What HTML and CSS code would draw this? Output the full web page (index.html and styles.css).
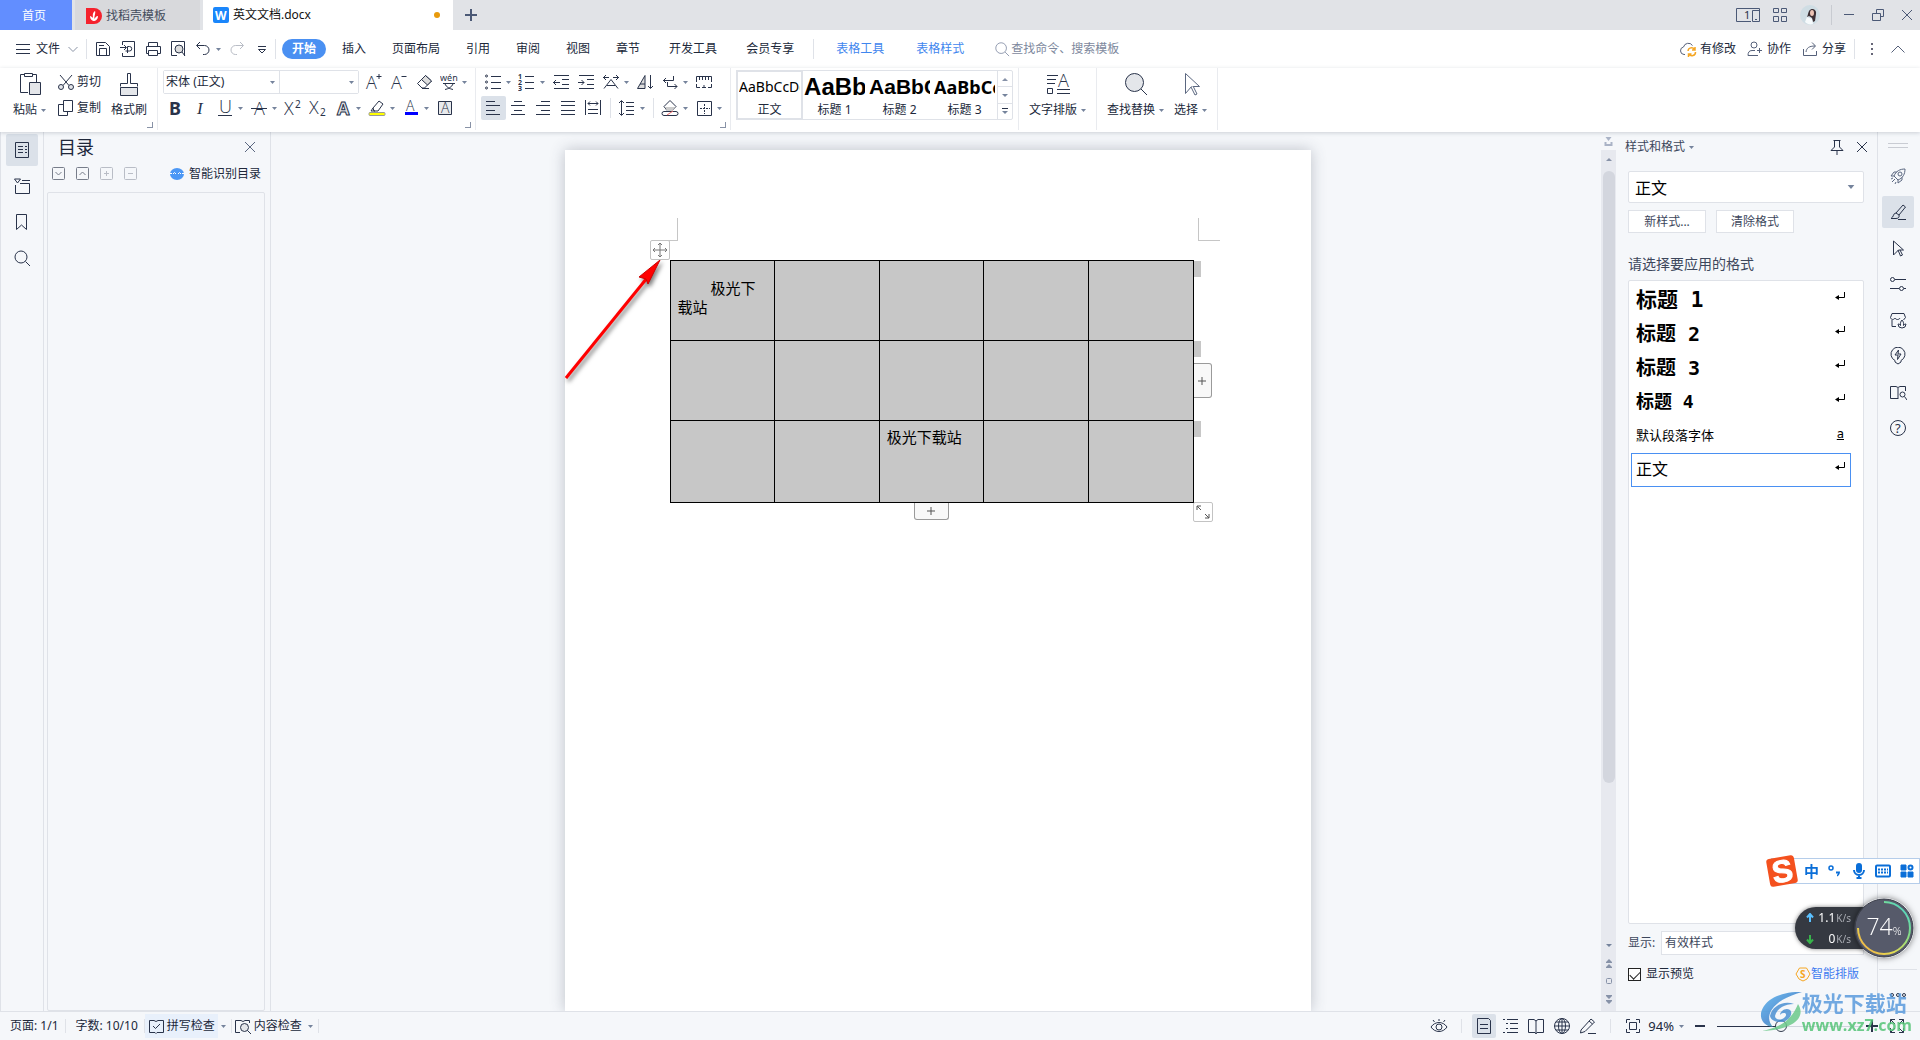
FILE: index.html
```
<!DOCTYPE html>
<html lang="zh-CN">
<head>
<meta charset="utf-8">
<title>英文文档.docx</title>
<link rel="stylesheet" href="styles.css">
</head>
<body>
<svg class="sprite" aria-hidden="true">
  <symbol id="caret" viewBox="0 0 5 3"><path d="M0 0h5L2.500 3z" fill="#75839c"/></symbol>
  <symbol id="chev-down" viewBox="0 0 18 18"><path d="M4.500 7l4.500 4.500L13.500 7"/></symbol>
  <symbol id="chev-up" viewBox="0 0 18 18"><path d="M2.500 12.500L9 6l6.500 6.500"/></symbol>
  <symbol id="menu" viewBox="0 0 18 18"><path d="M2 4.500h14M2 9.500h14M2 13.500h14"/></symbol>
  <symbol id="plus" viewBox="0 0 18 18"><path d="M9 3v12M3 9h12" stroke-width="2"/></symbol>
  <symbol id="close" viewBox="0 0 18 18"><path d="M4 4l10 10M14 4L4 14"/></symbol>
  <symbol id="min" viewBox="0 0 18 18"><path d="M4 8.500h10"/></symbol>
  <symbol id="restore" viewBox="0 0 18 18"><path d="M3.500 7.500h8v7h-8zM7.500 7V3.500h7v7H12"/></symbol>
  <symbol id="apps" viewBox="0 0 18 18"><path d="M2.500 2.500h5v4h-5zM10.500 2.500h5v4h-5zM2.500 10.500h5v5h-5zM10.500 10.500h5v5h-5z"/></symbol>
  <symbol id="device" viewBox="0 0 24 16"><path d="M15 14.500H.500v-13h23v13h-7v-11h7M19 12.500h2"/><text x="8" y="12" font-size="11">1</text></symbol>
  <symbol id="docer" viewBox="0 0 16 16"><path d="M0 0h8a8 8 0 0 1 0 16H0z" fill="#f5222d" stroke="none"/><path d="M4 8c0 4 3 5 4 5s4-1 4-5c-2 0-3 2-3.500 3C8 8 10 5 9 3 6 5 7 8 7 10 6 9 5 8 4 8z" fill="#fff" stroke="none"/></symbol>
  <symbol id="wps" viewBox="0 0 16 16"><rect width="16" height="16" rx="2" fill="#1a86fb" stroke="none"/><text x="2" y="13" font-size="12" font-weight="700" class="white">W</text></symbol>
  <symbol id="save" viewBox="0 0 18 18"><path d="M2.500 2.500h9l4 4v9h-13zM5.500 15V8.500h7V15M5 5.500h5"/></symbol>
  <symbol id="export" viewBox="0 0 18 18"><path d="M3.500 5V1.500h12v15h-12V13M1 7.500h6M5 5l2.500 2.500L5 10M8.500 13V6.500h2a2 2 0 0 1 0 4.500h-4"/></symbol>
  <symbol id="print" viewBox="0 0 18 18"><path d="M4.500 6V2.500h9V6M4 13.500H2.500v-7h14v7H14M4.500 10.500h9v5h-9z"/></symbol>
  <symbol id="preview" viewBox="0 0 18 18"><path d="M8 15.500H2.500v-14h13V16"/><circle cx="10" cy="9" r="4" fill="#ddd"/><path d="M13 12l3 4"/></symbol>
  <symbol id="undo" viewBox="0 0 18 18"><path d="M6 2L2.500 5.500 6 9M3 5.500h7.500a4.500 4.500 0 0 1 0 9H9"/></symbol>
  <symbol id="redo" viewBox="0 0 18 18"><path d="M12 2l3.500 3.500L12 9M15 5.500H7.500a4.500 4.500 0 0 0 0 9H9"/></symbol>
  <symbol id="custom" viewBox="0 0 18 18"><path d="M5 6.500h8M5.500 9.500h7L9 13z"/></symbol>
  <symbol id="search" viewBox="0 0 18 18"><circle cx="8" cy="8" r="6"/><path d="M12.500 12.500L17 17"/></symbol>
  <symbol id="cloud" viewBox="0 0 18 18"><path d="M6 14.500H5a3.800 3.800 0 0 1-.5-7.500 5 5 0 0 1 9-1.500"/><path d="M9 11a3.500 3.500 0 0 1 6.500-1.500M16.500 12a3.500 3.500 0 0 1-6.500 2M16 7v3h-3M9.500 17v-3h3" stroke="#f5a623" stroke-width="1.500"/></symbol>
  <symbol id="collab" viewBox="0 0 18 18"><circle cx="8" cy="5" r="3"/><path d="M9 10.500H6c-3 0-4 2-4 5h10M11 10.500h5M13.500 8v5"/></symbol>
  <symbol id="share" viewBox="0 0 18 18"><path d="M2.500 9v6.500h13V11M5 12c.5-4 3-6 9-6M11 2.500L14.500 6 11 9.500"/></symbol>
  <symbol id="dots" viewBox="0 0 18 18"><path d="M8 3h2v2H8zM8 8h2v2H8zM8 13h2v2H8z" fill="#667" stroke="none"/></symbol>
  <symbol id="paste" viewBox="0 0 24 24"><path d="M10 20.500H2.500v-18H6M15 2.500h3.500V10M6.500 1.500h8v3h-8z"/><path d="M11.500 10.500h11v12h-11z" fill="#e4e6ea"/></symbol>
  <symbol id="cut" viewBox="0 0 18 18"><path d="M3 2l9 10.500M15 2L6 12.500"/><circle cx="4" cy="14" r="2.500" fill="#e4e6ea"/><circle cx="14" cy="14" r="2.500" fill="#e4e6ea"/></symbol>
  <symbol id="copy" viewBox="0 0 18 18"><path d="M6.500 1.500h9v11h-9zM6 5.500H1.500v11h9V13"/></symbol>
  <symbol id="brush" viewBox="0 0 24 24"><path d="M3.500 14.500v-3h7v-10h3v10h7v3"/><path d="M3.500 15.500h17v8h-17z" fill="#e4e6ea"/></symbol>
  <symbol id="a-plus" viewBox="0 0 18 18"><text x="1" y="16" class="thin">A</text><path d="M11.500 3.500h5M14 1v5"/></symbol>
  <symbol id="a-minus" viewBox="0 0 18 18"><text x="1" y="16" class="thin">A</text><path d="M11.500 3.500h5"/></symbol>
  <symbol id="eraser" viewBox="0 0 18 18"><path d="M2.500 10.500l8-8 6 5.500-7 7H7z"/><path d="M6.500 6.500l4-4 6 5.500-4 4z" fill="#ddd"/><path d="M7 15.500h7"/></symbol>
  <symbol id="pinyin" viewBox="0 0 18 18"><text x="0" y="8" font-size="9">wén</text><path d="M3 10.500h12M5 11c1 3 5 5 8 5.500M13 11c-1 3-5 5-8 5.500"/></symbol>
  <symbol id="bold" viewBox="0 0 18 18"><text x="3" y="16" font-size="18" font-weight="700">B</text></symbol>
  <symbol id="italic" viewBox="0 0 18 18"><text x="6" y="15" font-size="17" class="slant">I</text></symbol>
  <symbol id="under" viewBox="0 0 18 18"><text x="3" y="14" class="thin">U</text><path d="M2 16.500h14"/></symbol>
  <symbol id="strike" viewBox="0 0 18 18"><text x="4" y="16" class="thin">A</text><path d="M1 9.500h16"/></symbol>
  <symbol id="sup" viewBox="0 0 18 18"><text x="0" y="16" class="thin">X</text><text x="11" y="9" font-size="10">2</text></symbol>
  <symbol id="sub" viewBox="0 0 18 18"><text x="0" y="15" class="thin">X</text><text x="11" y="17" font-size="10">2</text></symbol>
  <symbol id="a-effect" viewBox="0 0 18 18"><text x="3" y="16" font-size="18" font-weight="700" class="outline">A</text></symbol>
  <symbol id="marker" viewBox="0 0 18 18"><path d="M5 9l6-7 4 3-5 7H6zM5 9l-2 3h4"/><rect x="1" y="13.500" width="16" height="3" rx="1" fill="#ff0" stroke="#999"/></symbol>
  <symbol id="a-color" viewBox="0 0 18 18"><text x="4" y="12" class="thin small-a">A</text><rect x="3" y="13" width="13" height="3" fill="#00f" stroke="none"/></symbol>
  <symbol id="a-box" viewBox="0 0 18 18"><path d="M2.500 2.500h13v13h-13z" fill="#e8eaed"/><text x="5" y="14" class="thin small-a">A</text></symbol>
  <symbol id="bullets" viewBox="0 0 18 18"><path d="M7 3.500h10M7 9.500h10M7 15.500h10"/><circle cx="2.500" cy="3" r="1"/><circle cx="2.500" cy="9" r="1"/><circle cx="2.500" cy="15" r="1"/></symbol>
  <symbol id="numbers" viewBox="0 0 18 18"><path d="M7 3.500h9M7 9.500h9M7 15.500h9"/><g font-size="7" font-weight="700"><text x="0" y="6">1</text><text x="0" y="12">2</text><text x="0" y="18">3</text></g></symbol>
  <symbol id="outdent" viewBox="0 0 18 18"><path d="M2 2.500h15M10 6.500h7M10 11.500h7M2 15.500h15M1 9.500h7M4 7L1.500 9.500 4 12"/></symbol>
  <symbol id="indent" viewBox="0 0 18 18"><path d="M2 2.500h15M10 6.500h7M10 11.500h7M2 15.500h15M1 9.500h6M4.500 7L7 9.500 4.500 12"/></symbol>
  <symbol id="scale" viewBox="0 0 18 18"><path d="M2 15.500l7-9 7 9M5 12.500h8M1 4.500h6M4 2L1.500 4.500 4 7M11 4.500h6M14 2l2.500 2.500L14 7"/></symbol>
  <symbol id="sort" viewBox="0 0 18 18"><path d="M1.500 15.500L9 2.500v13zM4 11h5" fill="#ddd"/><path d="M14.500 2v13M12 13l2.500 2.500L17 13"/></symbol>
  <symbol id="wrap" viewBox="0 0 18 18"><path d="M12.500 3v4.500H2M5 5L2.500 7.500 5 10M6.500 9v4.500H16M13.500 11l2.500 2.500-2.500 2.500"/></symbol>
  <symbol id="ruler" viewBox="0 0 18 18"><path d="M1.500 9V3.500h15V9M4.500 4v3M7.500 4v3M10.500 4v3M13.500 4v3M1.500 11v3.500H5M16.500 11v3.500H13M7 14.500h4M9 12v3"/></symbol>
  <symbol id="al-left" viewBox="0 0 18 18"><path d="M2 2.500h9M2 6.500h14M2 11.500h9M2 15.500h14"/></symbol>
  <symbol id="al-center" viewBox="0 0 18 18"><path d="M5 2.500h8M2 6.500h14M5 11.500h8M2 15.500h14"/></symbol>
  <symbol id="al-right" viewBox="0 0 18 18"><path d="M7 2.500h9M2 6.500h14M7 11.500h9M2 15.500h14"/></symbol>
  <symbol id="al-just" viewBox="0 0 18 18"><path d="M2 2.500h14M2 6.500h14M2 11.500h14M2 15.500h14"/></symbol>
  <symbol id="al-dist" viewBox="0 0 18 18"><path d="M1.500 1v15M16.500 1v15M4 10.500h10M4 14.500h10M4 4.500h10M6 2.500l-2 2 2 2M12 2.500l2 2-2 2"/></symbol>
  <symbol id="spacing" viewBox="0 0 18 18"><path d="M8 3.500h8M8 7.500h8M8 11.500h8M8 15.500h8M3.500 2v14M1 4l2.500-2.500L6 4M1 14l2.500 2.500L6 14"/></symbol>
  <symbol id="fill" viewBox="0 0 18 18"><path d="M3 7.500l6-6 6 6-4 4H6z"/><path d="M4 8h10l-3 4H6z" fill="#ccc" stroke="none"/><path d="M3 12.500h12a1.500 1.500 0 0 1 0 4H3a1.500 1.500 0 0 1 0-4"/><path d="M6 16l6-4" stroke="#e66"/></symbol>
  <symbol id="border" viewBox="0 0 18 18"><path d="M2.500 2.500h14v14h-14z"/><path d="M9.500 5v10M5 9.500h10" stroke-dasharray="2 1"/></symbol>
  <symbol id="tri-up" viewBox="0 0 18 18"><path d="M6 11h6L9 8z" fill="#8792a8" stroke="none"/></symbol>
  <symbol id="tri-down" viewBox="0 0 18 18"><path d="M6 8h6l-3 3z" fill="#75839c" stroke="none"/></symbol>
  <symbol id="tri-more" viewBox="0 0 18 18"><path d="M6 6.500h6"/><path d="M6 9h6l-3 3z" fill="#75839c" stroke="none"/></symbol>
  <symbol id="typeset" viewBox="0 0 24 24"><path d="M1 3.500h11M1 7.500h9M1 11.500h8M1.500 16.500h5v5h-5zM11 17.500h13M11 21.500h13"/><text x="12" y="15" class="thin">A</text></symbol>
  <symbol id="find" viewBox="0 0 24 24"><circle cx="10.500" cy="10.500" r="9" fill="#e4e6ea"/><path d="M17 17l6 6"/></symbol>
  <symbol id="arrow-big" viewBox="0 0 24 24"><path d="M6.500 1.500l14 13h-8l-6 7z"/><path d="M12 15l4 8 2-1-4-8" fill="#fff"/></symbol>
  <symbol id="outline" viewBox="0 0 18 18"><path d="M2.500 1.500h13v15h-13zM5 5.500h5M12 5.500h2M5 8.500h5M12 8.500h2M5 11.500h5M12 11.500h2"/></symbol>
  <symbol id="folder" viewBox="0 0 18 18"><path d="M1.500 2h6L4.500 6zM9 3.500h8M2.500 8v8.500h14v-10H7"/></symbol>
  <symbol id="mark" viewBox="0 0 18 18"><path d="M3.500 1.500h10v15l-5-4.500-5 4.500z"/></symbol>
  <symbol id="box-down" viewBox="0 0 14 14"><rect x=".500" y=".500" width="12" height="12" rx="1"/><path d="M3.500 5l3 3 3-3"/></symbol>
  <symbol id="box-up" viewBox="0 0 14 14"><rect x=".500" y=".500" width="12" height="12" rx="1"/><path d="M3.500 8l3-3 3 3"/></symbol>
  <symbol id="box-plus" viewBox="0 0 14 14"><rect x=".500" y=".500" width="12" height="12" rx="1"/><path d="M4 6.500h5M6.500 4v5"/></symbol>
  <symbol id="box-minus" viewBox="0 0 14 14"><rect x=".500" y=".500" width="12" height="12" rx="1"/><path d="M4 6.500h5"/></symbol>
  <symbol id="robot" viewBox="0 0 16 14"><ellipse cx="8" cy="7" rx="7" ry="6" fill="#4b97f5" stroke="none"/><path d="M1 6.500h2M13 6.500h2M4 7l1.500-1.500L7 7M9 7l1.500-1.500L12 7" stroke="#fff"/></symbol>
  <symbol id="move" viewBox="0 0 18 18"><path d="M9 2v14M2 9h14M7 4l2-2 2 2M7 14l2 2 2-2M4 7L2 9l2 2M14 7l2 2-2 2" stroke="#777"/></symbol>
  <symbol id="resize" viewBox="0 0 18 18"><path d="M3 7V3h4M3 3l4 4M11 15h4v-4M15 15l-4-4" stroke="#555"/></symbol>
  <symbol id="add" viewBox="0 0 18 18"><path d="M9 5v8M5 9h8" stroke="#555"/></symbol>
  <symbol id="pin" viewBox="0 0 18 18"><path d="M5.500 2.500h7M6.500 3v6L3 12.500h12L11.500 9V3M9 13v4"/></symbol>
  <symbol id="enter" viewBox="0 0 18 18"><path d="M12.500 5v5.500H6"/><path d="M3 10.500L7 8v5z" fill="#000" stroke="none"/></symbol>
  <symbol id="rocket" viewBox="0 0 18 18"><path d="M5 9c2-5 6-7 11-7 0 5-2 9-7 11zM5 9H2l3-4h3M9 13v3l4-3v-3M2 12l2-1M3 15l3-3M6 17l1-2"/><circle cx="11" cy="7" r="2"/></symbol>
  <symbol id="pencil" viewBox="0 0 18 18"><path d="M7 10l7-8 2.500 2L10 12M7 10c-3 0-2 4-5 5.500h5c3 0 3.500-2 3-3.500zM9 16.500h8"/></symbol>
  <symbol id="pointer" viewBox="0 0 18 18"><path d="M4.500 2l10 9h-5l-5 5zM9 11l2.500 6 2-1-2.500-5"/></symbol>
  <symbol id="sliders" viewBox="0 0 18 18"><circle cx="3.500" cy="4.500" r="2"/><circle cx="12.500" cy="13.500" r="2"/><path d="M6 4.500h11M1 13.500h9M15 13.500h2"/></symbol>
  <symbol id="shop" viewBox="0 0 18 18"><path d="M3 9v6.500h4M3 2.500h12l1.500 4-2 2.500M3 2.500l-1.500 4C2 9 5 9 6 7c1 2 4 2 5 0M9 13a4 4 0 0 0 8 0c-1 0-2 .5-2.500 1.500C15 12 14 10 13 9c-1 1-2 3-1.500 5.500C11 13.500 10 13 9 13z"/></symbol>
  <symbol id="bulb" viewBox="0 0 18 18"><path d="M6 15v-1.500a7 7 0 1 1 6 0V15l-3 2zM9.500 3L6 8h3l-.5 4.500L12 7H9z"/></symbol>
  <symbol id="book-search" viewBox="0 0 18 18"><path d="M9 15.500H1.500v-12H7l2 1 2-1h5.500V8M9 5v11"/><circle cx="13.500" cy="11.500" r="2.500"/><path d="M15.500 13.500L18 17"/></symbol>
  <symbol id="help" viewBox="0 0 18 18"><circle cx="9" cy="9" r="7.500"/><text x="6" y="14" font-size="13">?</text></symbol>
  <symbol id="more" viewBox="0 0 18 18"><circle cx="3" cy="9" r="1.500"/><circle cx="9" cy="9" r="1.500"/><circle cx="15" cy="9" r="1.500"/></symbol>
  <symbol id="ruler-toggle" viewBox="0 0 14 18"><path d="M4 5h6L7 9zM3 10h2v4H3zM9 10h2v4H9zM5 12h4v2H5z" fill="#aab3c6" stroke="none"/></symbol>
  <symbol id="page-up" viewBox="0 0 14 18"><path d="M4 8h6L7 5zM4 13h6l-3-3z" fill="#8792a8"/><path d="M4 8.500h6M4 13.500h6" stroke="#8792a8"/></symbol>
  <symbol id="page-dot" viewBox="0 0 14 18"><rect x="4.500" y="6.500" width="5" height="5" rx="1" stroke="#8792a8"/></symbol>
  <symbol id="page-down" viewBox="0 0 14 18"><path d="M4 6h6L7 9zM4 11h6l-3 3z" fill="#8792a8"/><path d="M4 5.500h6M4 10.500h6" stroke="#8792a8"/></symbol>
  <symbol id="gold" viewBox="0 0 16 16"><path d="M4.500 2h7L15 8l-3 5-4 2-4-2-3-5z" stroke="#f5a623"/><text x="5" y="12" font-size="10" font-weight="700" class="orange">S</text></symbol>
  <symbol id="spell" viewBox="0 0 18 18"><path d="M8 15.500H2.500v-12H7l2 1 2-1h5.500v12H10l-1 1zM6 9l2.500 2.500L13 7"/></symbol>
  <symbol id="content" viewBox="0 0 18 18"><path d="M6 15.500H1.500v-12H7l2 1 2-1h4.500V6"/><circle cx="10.500" cy="10.500" r="4" fill="#e4e6ea"/><path d="M13.500 13.500L17 17"/></symbol>
  <symbol id="eye" viewBox="0 0 18 18"><path d="M1 10c4-6 12-6 16 0-4 6-12 6-16 0zM9 2v2M3 3l1.500 2M15 3l-1.500 2"/><circle cx="9" cy="10" r="3"/></symbol>
  <symbol id="v-page" viewBox="0 0 18 18"><path d="M2.500 1.500h11l2 2v13h-13zM5 7.500h8M5 11.500h8"/></symbol>
  <symbol id="v-list" viewBox="0 0 18 18"><path d="M2 2.500h2M6 2.500h11M5 6.500h2M9 6.500h8M5 11.500h2M9 11.500h8M2 15.500h2M6 15.500h11"/></symbol>
  <symbol id="v-read" viewBox="0 0 18 18"><path d="M8 15.500H1.500v-13H7l2 1.500 2-1.500h5.500v13H10L9 17zM9 4v12"/></symbol>
  <symbol id="v-web" viewBox="0 0 18 18"><circle cx="9" cy="9" r="7.500"/><ellipse cx="9" cy="9" rx="3.500" ry="7.500"/><path d="M1.500 9h15M3 5h12M3 13h12M9 2v14"/></symbol>
  <symbol id="v-write" viewBox="0 0 18 18"><path d="M2 13l10-11 3.500 3L6 14.500 1.500 16zM10 4l3.500 3M9 16.500h8"/></symbol>
  <symbol id="fit" viewBox="0 0 18 18"><path d="M2.500 6V2.500H6M12 2.500h3.500V6M15.500 12v3.500H12M6 15.500H2.500V12M5.500 5.500h7v7h-7z"/></symbol>
  <symbol id="full" viewBox="0 0 18 18"><path d="M2.500 7V2.500H7M2.500 2.500L7 7M11 2.500h4.500V7M15.500 2.500L11 7M15.500 11v4.500H11M15.500 15.500L11 11M7 15.500H2.500V11M2.500 15.500L7 11"/></symbol>
  <symbol id="mic" viewBox="0 0 18 18"><rect x="6" y="1" width="6" height="10" rx="3" fill="#0a6ed8" stroke="none"/><path d="M4 8a5 5 0 0 0 10 0M9 13v4M6.500 16h5" stroke="#0a6ed8" stroke-width="2"/></symbol>
  <symbol id="keyboard" viewBox="0 0 18 18"><rect x="2" y="3.500" width="14" height="11" rx="1" stroke="#0a6ed8" stroke-width="2"/><path d="M4 7.500h10M4 10.500h10" stroke="#0a6ed8" stroke-dasharray="2 1" stroke-width="2"/></symbol>
  <symbol id="tools" viewBox="0 0 18 18"><path d="M3 3h5v5H3zM3 10h5v5H3zM10 10h5v5h-5z" fill="#0a6ed8" stroke="#0a6ed8"/><circle cx="12.500" cy="5.500" r="2" stroke="#0a6ed8" stroke-width="2"/></symbol>
  <symbol id="punct" viewBox="0 0 18 18"><circle cx="5" cy="6" r="2" stroke="#0a6ed8" stroke-width="1.500"/><path d="M10 9.500h4c0 2.500-1 4-3 5v-1.500l1-1.500h-2z" fill="#0a6ed8" stroke="none"/></symbol>
  <symbol id="up" viewBox="0 0 10 10"><path d="M5 9V1M2 4.500L5 1l3 3.500" stroke="#5ac0ff" stroke-width="2"/></symbol>
  <symbol id="down" viewBox="0 0 10 10"><path d="M5 1v8M2 5.500L5 9l3-3.500" stroke="#37b34a" stroke-width="2"/></symbol>
</svg>

<header class="titlebar">
  <nav class="tabs" aria-label="文档标签">
    <button class="tab tab-home">首页</button>
    <button class="tab tab-docer"><svg class="i16"><use href="#docer"/></svg>找稻壳模板</button>
    <button class="tab tab-doc"><svg class="i16"><use href="#wps"/></svg><span class="tab-name">英文文档.docx</span><i class="unsaved"></i></button>
    <button class="tab-new" aria-label="新建"><svg class="i18"><use href="#plus"/></svg></button>
  </nav>
  <div class="window-tools">
    <button class="win" aria-label="设备"><svg class="i24w"><use href="#device"/></svg></button>
    <button class="win" aria-label="应用"><svg class="i18"><use href="#apps"/></svg></button>
    <svg class="avatar" viewBox="0 0 20 20" role="img" aria-label="头像"><circle cx="10" cy="10" r="10" fill="#cfdde4"/><path d="M9 6c3-4 8-1 7 3l-1 7-2 1-1-4-3-2-2 1c1-2 1-4 2-6z" fill="#3c3035"/><ellipse cx="12" cy="8" rx="2" ry="3" fill="#eac3b4"/><path d="M7 12l5 2 1 5c-3 1-6 0-8-2z" fill="#f6fafc"/></svg>
    <i class="vsep"></i>
    <button class="win" aria-label="最小化"><svg class="i18"><use href="#min"/></svg></button>
    <button class="win" aria-label="还原"><svg class="i18"><use href="#restore"/></svg></button>
    <button class="win" aria-label="关闭"><svg class="i18"><use href="#close"/></svg></button>
  </div>
</header>

<div class="menubar">
  <button class="file"><svg class="i18"><use href="#menu"/></svg>文件<svg class="i18 faint"><use href="#chev-down"/></svg></button>
  <i class="vsep"></i>
  <div class="tools quick">
    <button class="tool" aria-label="保存"><svg class="i18"><use href="#save"/></svg></button>
    <button class="tool" aria-label="输出"><svg class="i18"><use href="#export"/></svg></button>
    <button class="tool" aria-label="打印"><svg class="i18"><use href="#print"/></svg></button>
    <button class="tool" aria-label="预览"><svg class="i18"><use href="#preview"/></svg></button>
    <button class="tool drop" aria-label="撤销"><svg class="i18"><use href="#undo"/></svg><svg class="caret"><use href="#caret"/></svg></button>
    <button class="tool off" aria-label="恢复"><svg class="i18"><use href="#redo"/></svg></button>
    <button class="tool" aria-label="自定义"><svg class="i18"><use href="#custom"/></svg></button>
  </div>
  <i class="vsep"></i>
  <nav class="menu" aria-label="功能区">
    <button class="menu-item current">开始</button>
    <button class="menu-item">插入</button>
    <button class="menu-item">页面布局</button>
    <button class="menu-item">引用</button>
    <button class="menu-item">审阅</button>
    <button class="menu-item">视图</button>
    <button class="menu-item">章节</button>
    <button class="menu-item roomy">开发工具</button>
    <button class="menu-item">会员专享</button>
    <i class="vsep"></i>
    <button class="menu-item roomy context">表格工具</button>
    <button class="menu-item roomy context">表格样式</button>
  </nav>
  <label class="search"><svg class="i18"><use href="#search"/></svg><input type="text" placeholder="查找命令、搜索模板" aria-label="查找命令、搜索模板"></label>
  <div class="menu-right">
    <button class="link-tool"><svg class="i18"><use href="#cloud"/></svg>有修改</button>
    <button class="link-tool"><svg class="i18"><use href="#collab"/></svg>协作</button>
    <button class="link-tool"><svg class="i18"><use href="#share"/></svg>分享</button>
    <i class="vsep"></i>
    <button class="plain" aria-label="更多"><svg class="i18"><use href="#dots"/></svg></button>
    <button class="plain" aria-label="收起"><svg class="i18"><use href="#chev-up"/></svg></button>
  </div>
</div>

<div class="ribbon">
  <section class="group clipboard">
    <button class="big"><svg class="i24"><use href="#paste"/></svg><span>粘贴<svg class="caret"><use href="#caret"/></svg></span></button>
    <div class="stack">
      <button class="small"><svg class="i18"><use href="#cut"/></svg>剪切</button>
      <button class="small"><svg class="i18"><use href="#copy"/></svg>复制</button>
    </div>
    <button class="big"><svg class="i24"><use href="#brush"/></svg><span>格式刷</span></button>
    <button class="launcher" aria-label="剪贴板"></button>
  </section>

  <section class="group rows">
    <div class="tools">
      <div class="fonts">
        <div class="combo font-name"><select aria-label="字体"><option>宋体 (正文)</option></select><svg class="caret"><use href="#caret"/></svg></div>
        <div class="combo font-size"><select aria-label="字号"><option></option></select><svg class="caret"><use href="#caret"/></svg></div>
      </div>
      <button class="tool" aria-label="增大字号"><svg class="i18"><use href="#a-plus"/></svg></button>
      <button class="tool" aria-label="减小字号"><svg class="i18"><use href="#a-minus"/></svg></button>
      <button class="tool" aria-label="清除格式"><svg class="i18"><use href="#eraser"/></svg></button>
      <button class="tool drop" aria-label="拼音"><svg class="i18"><use href="#pinyin"/></svg><svg class="caret"><use href="#caret"/></svg></button>
    </div>
    <div class="tools">
      <button class="tool" aria-label="加粗"><svg class="i18"><use href="#bold"/></svg></button>
      <button class="tool" aria-label="倾斜"><svg class="i18"><use href="#italic"/></svg></button>
      <button class="tool drop" aria-label="下划线"><svg class="i18"><use href="#under"/></svg><svg class="caret"><use href="#caret"/></svg></button>
      <button class="tool drop" aria-label="删除线"><svg class="i18"><use href="#strike"/></svg><svg class="caret"><use href="#caret"/></svg></button>
      <button class="tool" aria-label="上标"><svg class="i18"><use href="#sup"/></svg></button>
      <button class="tool" aria-label="下标"><svg class="i18"><use href="#sub"/></svg></button>
      <button class="tool drop" aria-label="文字效果"><svg class="i18"><use href="#a-effect"/></svg><svg class="caret"><use href="#caret"/></svg></button>
      <button class="tool drop" aria-label="突出显示"><svg class="i18"><use href="#marker"/></svg><svg class="caret"><use href="#caret"/></svg></button>
      <button class="tool drop" aria-label="字体颜色"><svg class="i18"><use href="#a-color"/></svg><svg class="caret"><use href="#caret"/></svg></button>
      <button class="tool" aria-label="字符底纹"><svg class="i18"><use href="#a-box"/></svg></button>
    </div>
    <button class="launcher" aria-label="字体设置"></button>
  </section>

  <section class="group rows">
    <div class="tools">
      <button class="tool drop" aria-label="项目符号"><svg class="i18"><use href="#bullets"/></svg><svg class="caret"><use href="#caret"/></svg></button>
      <button class="tool drop" aria-label="编号"><svg class="i18"><use href="#numbers"/></svg><svg class="caret"><use href="#caret"/></svg></button>
      <button class="tool" aria-label="减少缩进"><svg class="i18"><use href="#outdent"/></svg></button>
      <button class="tool" aria-label="增加缩进"><svg class="i18"><use href="#indent"/></svg></button>
      <button class="tool drop" aria-label="中文版式"><svg class="i18"><use href="#scale"/></svg><svg class="caret"><use href="#caret"/></svg></button>
      <button class="tool" aria-label="排序"><svg class="i18"><use href="#sort"/></svg></button>
      <button class="tool drop" aria-label="显示标记"><svg class="i18"><use href="#wrap"/></svg><svg class="caret"><use href="#caret"/></svg></button>
      <button class="tool" aria-label="制表位"><svg class="i18"><use href="#ruler"/></svg></button>
    </div>
    <div class="tools">
      <button class="tool on" aria-label="左对齐"><svg class="i18"><use href="#al-left"/></svg></button>
      <button class="tool" aria-label="居中"><svg class="i18"><use href="#al-center"/></svg></button>
      <button class="tool" aria-label="右对齐"><svg class="i18"><use href="#al-right"/></svg></button>
      <button class="tool" aria-label="两端对齐"><svg class="i18"><use href="#al-just"/></svg></button>
      <button class="tool" aria-label="分散对齐"><svg class="i18"><use href="#al-dist"/></svg></button>
      <i class="vsep"></i>
      <button class="tool drop" aria-label="行距"><svg class="i18"><use href="#spacing"/></svg><svg class="caret"><use href="#caret"/></svg></button>
      <i class="vsep"></i>
      <button class="tool drop" aria-label="底纹颜色"><svg class="i18"><use href="#fill"/></svg><svg class="caret"><use href="#caret"/></svg></button>
      <button class="tool drop" aria-label="边框"><svg class="i18"><use href="#border"/></svg><svg class="caret"><use href="#caret"/></svg></button>
    </div>
    <button class="launcher" aria-label="段落设置"></button>
  </section>

  <section class="group">
    <div class="gallery">
      <button class="style picked"><span class="sample s0">AaBbCcDd</span><span>正文</span></button>
      <button class="style"><span class="sample s1">AaBb</span><span>标题 1</span></button>
      <button class="style"><span class="sample s2">AaBbC</span><span>标题 2</span></button>
      <button class="style"><span class="sample s3">AaBbCc</span><span>标题 3</span></button>
      <div class="gallery-nav">
        <button aria-label="上一行"><svg class="i18"><use href="#tri-up"/></svg></button>
        <button aria-label="下一行"><svg class="i18"><use href="#tri-down"/></svg></button>
        <button aria-label="展开"><svg class="i18"><use href="#tri-more"/></svg></button>
      </div>
    </div>
  </section>
  <section class="group wide">
    <button class="big"><svg class="i24"><use href="#typeset"/></svg><span>文字排版<svg class="caret"><use href="#caret"/></svg></span></button>
  </section>
  <section class="group wide">
    <button class="big"><svg class="i24"><use href="#find"/></svg><span>查找替换<svg class="caret"><use href="#caret"/></svg></span></button>
    <button class="big"><svg class="i24 soft"><use href="#arrow-big"/></svg><span>选择<svg class="caret"><use href="#caret"/></svg></span></button>
  </section>
</div>

<main class="work">
  <nav class="rail rail-left" aria-label="导航">
    <button class="rail-btn on" aria-label="目录"><svg class="i18"><use href="#outline"/></svg></button>
    <button class="rail-btn" aria-label="章节"><svg class="i18"><use href="#folder"/></svg></button>
    <button class="rail-btn" aria-label="书签"><svg class="i18"><use href="#mark"/></svg></button>
    <button class="rail-btn" aria-label="查找"><svg class="i18"><use href="#search"/></svg></button>
  </nav>

  <aside class="toc">
    <div class="toc-head"><h2>目录</h2><button class="plain" aria-label="关闭目录"><svg class="i18 soft"><use href="#close"/></svg></button></div>
    <div class="toc-tools">
      <button class="plain mid" aria-label="展开"><svg class="i14"><use href="#box-down"/></svg></button>
      <button class="plain mid" aria-label="收起"><svg class="i14"><use href="#box-up"/></svg></button>
      <button class="plain off" aria-label="增加"><svg class="i14"><use href="#box-plus"/></svg></button>
      <button class="plain off" aria-label="减少"><svg class="i14"><use href="#box-minus"/></svg></button>
      <button class="plain smart"><svg class="i16"><use href="#robot"/></svg>智能识别目录</button>
    </div>
    <div class="toc-list"></div>
  </aside>

  <section class="canvas">
    <article class="page">
      <i class="crop crop-l"></i><i class="crop crop-r"></i>
      <div class="table-wrap">
        <table>
          <tr><td class="lead">极光下载站</td><td></td><td></td><td></td><td></td></tr>
          <tr><td></td><td></td><td></td><td></td><td></td></tr>
          <tr><td></td><td></td><td>极光下载站</td><td></td><td></td></tr>
        </table>
        <div class="row-ends"><i></i><i></i><i></i></div>
        <button class="grip grip-move" aria-label="移动表格"><svg class="i18"><use href="#move"/></svg></button>
        <button class="grip grip-size" aria-label="调整表格"><svg class="i18"><use href="#resize"/></svg></button>
        <button class="add add-col" aria-label="增加列"><svg class="i18"><use href="#add"/></svg></button>
        <button class="add add-row" aria-label="增加行"><svg class="i18"><use href="#add"/></svg></button>
        <svg class="arrow" viewBox="0 0 110 130" aria-hidden="true"><path d="M1 118L82 18" stroke="#f00" stroke-width="3"/><path d="M95 0L83 24 81 19 74 17z" fill="#f00" stroke="#c00"/></svg>
      </div>
    </article>
  </section>

  <div class="scrollbar">
    <svg class="sb-icon sb-top"><use href="#ruler-toggle"/></svg>
    <svg class="i18"><use href="#tri-up"/></svg>
    <div class="track"><div class="thumb"></div></div>
    <svg class="i18"><use href="#tri-down"/></svg>
    <svg class="sb-icon"><use href="#page-up"/></svg>
    <svg class="sb-icon"><use href="#page-dot"/></svg>
    <svg class="sb-icon"><use href="#page-down"/></svg>
  </div>

  <aside class="panel">
    <div class="panel-head"><h2>样式和格式<svg class="caret"><use href="#caret"/></svg></h2><button class="plain" aria-label="固定"><svg class="i18"><use href="#pin"/></svg></button><button class="plain" aria-label="关闭"><svg class="i18"><use href="#close"/></svg></button></div>
    <div class="combo current-style"><select aria-label="当前样式"><option>正文</option></select><svg class="caret big-caret"><use href="#caret"/></svg></div>
    <div class="panel-buttons"><button>新样式...</button><button>清除格式</button></div>
    <h3>请选择要应用的格式</h3>
    <ul class="style-list">
      <li class="h1">标题 1<svg class="i18"><use href="#enter"/></svg></li>
      <li class="h2">标题 2<svg class="i18"><use href="#enter"/></svg></li>
      <li class="h2">标题 3<svg class="i18"><use href="#enter"/></svg></li>
      <li class="h4">标题 4<svg class="i18"><use href="#enter"/></svg></li>
      <li class="font">默认段落字体<u>a</u></li>
      <li class="body picked">正文<svg class="i18"><use href="#enter"/></svg></li>
    </ul>
    <div class="show-row"><label for="show">显示:</label><div class="combo"><select id="show"><option>有效样式</option></select><svg class="caret"><use href="#caret"/></svg></div></div>
    <div class="preview-row"><label><input type="checkbox" checked>显示预览</label><a href="#"><svg class="i16"><use href="#gold"/></svg>智能排版</a></div>
  </aside>

  <nav class="rail rail-right" aria-label="任务窗格">
    <i class="handle"></i>
    <button class="rail-btn soft" aria-label="快捷"><svg class="i18"><use href="#rocket"/></svg></button>
    <button class="rail-btn on" aria-label="样式"><svg class="i18"><use href="#pencil"/></svg></button>
    <button class="rail-btn" aria-label="选择"><svg class="i18"><use href="#pointer"/></svg></button>
    <button class="rail-btn" aria-label="属性"><svg class="i18"><use href="#sliders"/></svg></button>
    <button class="rail-btn" aria-label="素材"><svg class="i18"><use href="#shop"/></svg></button>
    <button class="rail-btn" aria-label="推荐"><svg class="i18"><use href="#bulb"/></svg></button>
    <button class="rail-btn" aria-label="词典"><svg class="i18"><use href="#book-search"/></svg></button>
    <button class="rail-btn" aria-label="帮助"><svg class="i18"><use href="#help"/></svg></button>
    <button class="rail-btn rail-more" aria-label="更多"><svg class="i18"><use href="#more"/></svg></button>
  </nav>
</main>

<footer class="status">
  <span class="stat">页面: 1/1</span><i class="vsep"></i>
  <span class="stat">字数: 10/10</span><i class="vsep"></i>
  <button class="check spell"><svg class="i18"><use href="#spell"/></svg>拼写检查</button><svg class="caret"><use href="#caret"/></svg><i class="vsep"></i>
  <button class="check"><svg class="i18"><use href="#content"/></svg>内容检查</button><svg class="caret"><use href="#caret"/></svg><i class="vsep"></i>
  <div class="views">
    <button class="view" aria-label="护眼"><svg class="i18"><use href="#eye"/></svg></button>
    <i class="vsep"></i>
    <button class="view on" aria-label="页面视图"><svg class="i18"><use href="#v-page"/></svg></button>
    <button class="view" aria-label="大纲"><svg class="i18"><use href="#v-list"/></svg></button>
    <button class="view" aria-label="阅读版式"><svg class="i18"><use href="#v-read"/></svg></button>
    <button class="view" aria-label="Web版式"><svg class="i18"><use href="#v-web"/></svg></button>
    <button class="view" aria-label="写作模式"><svg class="i18"><use href="#v-write"/></svg></button>
    <i class="vsep"></i>
    <button class="view" aria-label="最佳显示"><svg class="i18"><use href="#fit"/></svg></button>
  </div>
  <button class="zoom-value">94%<svg class="caret"><use href="#caret"/></svg></button>
  <button class="plain zoom-btn" aria-label="缩小"><i class="minus"></i></button>
  <input class="zoom" type="range" min="0" max="100" value="43" aria-label="显示比例">
  <button class="plain zoom-btn" aria-label="放大"><svg class="i18"><use href="#plus"/></svg></button>
  <button class="plain full" aria-label="全屏"><svg class="i18"><use href="#full"/></svg></button>
</footer>

<div class="ime">
  <svg class="sogou" viewBox="0 0 32 32"><g transform="rotate(-10 16 16)"><rect x="2" y="2" width="28" height="28" rx="3" fill="#f4511e" stroke="none"/><text x="6" y="27" font-size="31" font-weight="700" class="white heavy">S</text></g></svg>
  <b>中</b>
  <svg class="i18"><use href="#punct"/></svg>
  <svg class="i18"><use href="#mic"/></svg>
  <svg class="i18"><use href="#keyboard"/></svg>
  <svg class="i18"><use href="#tools"/></svg>
</div>

<div class="meter">
  <div class="speeds">
    <div><svg class="i10"><use href="#up"/></svg><b>1.1</b><small>K/s</small></div>
    <div><svg class="i10"><use href="#down"/></svg><b>0</b><small>K/s</small></div>
  </div>
  <div class="ball">
    <svg viewBox="0 0 60 60" class="ring"><defs><linearGradient id="rg" x1="0" y1="1" x2="1" y2="0"><stop offset="0" stop-color="#f5a742"/><stop offset=".35" stop-color="#e3dc52"/><stop offset=".7" stop-color="#7ddc8c"/><stop offset="1" stop-color="#3fd0e0"/></linearGradient></defs><circle cx="30" cy="30" r="29" fill="#565a6a" stroke="#3b3e49"/><path d="M30 4a26 26 0 1 1-26 26" stroke="url(#rg)" stroke-width="2"/></svg>
    <p>74<small>%</small></p>
  </div>
</div>

<div class="watermark">
  <svg viewBox="0 0 42 42"><defs><linearGradient id="wg" x1="0" y1="0" x2="1" y2="1"><stop offset="0" stop-color="#57b6f0"/><stop offset=".5" stop-color="#3f86cf"/><stop offset="1" stop-color="#59c37a"/></linearGradient></defs><path d="M42 1C22 0 4 8 1 22c-1 9 5 13 12 14C4 26 10 10 42 1z" fill="url(#wg)" stroke="none"/><path d="M10 25c2-10 14-16 24-12-9 0-17 4-19 12 0 4 6 5 10 1 2-2 1-4-1-4-3 0-4 2-4 2 0-4 6-8 10-5 4 4-2 12-9 12-6 0-10-2-11-6z" fill="#4a90d2" stroke="none"/><path d="M38 13c8 12-2 26-36 27 20-4 30-12 36-27z" fill="#6cc98a" stroke="none"/></svg>
  <p><strong>极光下载站</strong><span>www.xz7.com</span></p>
</div>
</body>
</html>
```
FILE: styles.css
```
* { box-sizing: border-box; }

:root {
  --ink: #29334a;
  --soft: #5b6780;
  --line: #dfe2e8;
  --pane: #f5f7fa;
  --on: #dbe1e9;
  --blue: #4a90f2;
  --ui: "Noto Sans", "Noto Sans CJK SC", sans-serif;
}

body {
  margin: 0;
  height: 100vh;
  display: flex;
  flex-direction: column;
  overflow: hidden;
  background: var(--pane);
  color: #20283a;
  font: 12px/18px var(--ui);
}

button, select, input {
  font: inherit;
  color: inherit;
  border: 0;
  padding: 0;
  margin: 0;
  background: none;
  border-radius: 0;
}
button { white-space: nowrap; }
h2, h3, p, ul { margin: 0; padding: 0; font-weight: 400; }

svg { display: block; flex: none; fill: none; stroke: currentColor; }
svg text { fill: var(--ink); stroke: none; font-family: "Noto Sans", sans-serif; }
svg .thin { font: 300 18px "Open Sans", sans-serif; }
svg .small-a { font-size: 14px; }
svg .slant { font-family: "Liberation Serif", serif; font-style: italic; }
svg .outline { fill: #e4e6ea; stroke: var(--ink); }
svg .white { fill: #fff; }
svg .orange { fill: #f5a623; }
svg .heavy { stroke: #fff; stroke-width: 1; font-family: "Liberation Sans", sans-serif; }
.sprite { display: none; }
.i10 { width: 10px; height: 10px; }
.i14 { width: 14px; height: 14px; }
.i16 { width: 16px; height: 16px; }
.i18 { width: 18px; height: 18px; color: var(--ink); }
.i24 { width: 24px; height: 24px; color: var(--ink); }
.i24w { width: 24px; height: 16px; }
.caret { width: 5px; height: 3px; stroke: none; }
.faint { color: #8b94a6; }
.soft, .soft svg { color: var(--soft); }
.off svg { color: #b9bdc6; }
.mid svg { color: #777d8a; }
.vsep { flex: none; width: 1px; height: 20px; background: var(--line); }
.plain { display: flex; align-items: center; }

/* title bar */
.titlebar { flex: none; display: flex; justify-content: space-between; height: 30px; background: #e1e3e7; }
.tabs { display: flex; }
.tab { display: flex; align-items: center; gap: 4px; padding-top: 1px; }
.tab-home { width: 72px; justify-content: center; padding-right: 4px; background: #628eff; color: #fff; }
.tab-docer { width: 125px; margin: 0 3px; padding-left: 11px; background: #d8d9dc; color: #444c5c; }
.tab-doc { width: 250px; padding: 0 13px 0 10px; background: #fff; color: #111; }
.tab-name { flex: 1; text-align: left; }
.unsaved { width: 6px; height: 6px; border-radius: 3px; background: #e89a0c; }
.tab-new { padding: 0 9px; }
.tab-new .i18, .win svg { color: #4b5976; }
.window-tools { display: flex; align-items: center; gap: 11px; padding-right: 4px; }
.avatar { width: 20px; height: 20px; stroke: none; }
.window-tools .vsep { background: #c8cbd1; margin-right: -3px; }

/* menu bar */
.menubar { flex: none; display: flex; align-items: center; height: 38px; background: #fff; }
.file { display: flex; align-items: center; gap: 4px; padding: 0 4px 0 14px; }
.tools { display: flex; align-items: center; height: 24px; }
.tool { width: 25px; height: 24px; display: flex; align-items: center; padding-left: 3px; }
.tool.drop { width: 34px; gap: 4px; }
.tool.on { background: var(--on); border-radius: 2px; }
.quick { margin-left: 4px; }
.menu { display: flex; align-items: center; margin-left: 6px; }
.menu-item { padding: 0 13px; }
.menu-item.current { width: 44px; height: 20px; padding: 0; margin-right: 3px; border-radius: 10px; background: var(--blue); color: #fff; font-weight: 700; }
.menu-item.roomy { padding: 0 16px; }
.menu .vsep { margin: 0 6px; }
.context { color: #3f86ee; }
.search { display: flex; align-items: center; gap: 1px; margin-left: 14px; }
.search .i18 { width: 16px; height: 16px; color: #8792a8; }
.search input { width: 160px; outline: 0; }
.search input::placeholder { color: #7d889d; opacity: 1; }
.menu-right { display: flex; align-items: center; gap: 8px; margin-left: auto; padding-right: 13px; }
.link-tool { display: flex; align-items: center; gap: 3px; margin-left: 2px; }
.menu-right .i18 { color: #56617a; }

/* ribbon */
.ribbon { flex: none; display: flex; height: 64px; background: #fff; box-shadow: 0 1px 4px rgba(40, 50, 70, .2); z-index: 1; }
.group { display: flex; align-items: flex-start; height: 62px; padding: 2px 5px 0; border-right: 1px solid #e9ebef; }
.rows { flex-direction: column; gap: 2px; padding-right: 4px; }
.clipboard { padding: 2px 4px 0 13px; }
.big { display: flex; flex-direction: column; align-items: center; padding-top: 2px; }
.big span { display: flex; align-items: center; gap: 4px; line-height: 28px; }
.stack { display: flex; flex-direction: column; gap: 2px; margin: 0 10px 0 11px; }
.small { display: flex; align-items: center; gap: 2px; height: 24px; }
.launcher { width: 6px; height: 6px; border: solid #8892a6; border-width: 0 1px 1px 0; align-self: flex-end; }
.clipboard .launcher { margin-bottom: 2px; }
.wide { gap: 10px; padding: 2px 10px 0; }
.fonts { display: flex; height: 24px; margin-right: 3px; border: 1px solid var(--line); border-radius: 2px; }
.combo { display: grid; align-items: center; background: #fff; }
.combo select { grid-area: 1 / 1; width: 100%; height: 100%; appearance: none; outline: 0; }
.combo .caret { grid-area: 1 / 1; justify-self: end; margin-right: 4px; pointer-events: none; }
.font-name { width: 116px; padding-left: 2px; border-right: 1px solid var(--line); }
.font-size { width: 78px; }
.tools > .vsep { margin: 0 4px; }

.gallery { display: flex; height: 50px; border: 1px solid var(--line); border-radius: 2px; }
.style { width: 65px; display: flex; flex-direction: column; justify-content: space-between; align-items: center; overflow: hidden; }
.style.picked { outline: 2px solid var(--line); outline-offset: -1px; }
.sample { width: 61px; height: 30px; line-height: 32px; overflow: hidden; text-align: left; color: #000; }
.s0 { font-size: 14px; }
.s1 { font-size: 24px; font-weight: 700; font-family: "Liberation Sans", sans-serif; }
.s2 { font-size: 21px; font-weight: 700; font-family: "Liberation Sans", sans-serif; }
.s3 { font-size: 18px; font-weight: 700; }
.gallery-nav { width: 15px; display: flex; flex-direction: column; border-left: 1px solid var(--line); }
.gallery-nav button { flex: 1; display: flex; align-items: center; justify-content: center; overflow: hidden; }
.gallery-nav button + button { border-top: 1px solid var(--line); }

/* work area */
.work { flex: 1; min-height: 0; display: flex; }
.rail { flex: none; display: flex; flex-direction: column; gap: 4px; padding-top: 2px; align-items: center; width: 44px; }
.rail-left { border: solid var(--line); border-width: 0 1px; }
.rail-right { width: 43px; padding-right: 2px; border-left: 1px solid var(--line); }
.rail-btn { width: 32px; height: 32px; display: flex; align-items: center; justify-content: center; }
.rail-btn.on { background: var(--on); border-radius: 2px; }
.handle { width: 20px; height: 5px; margin: 9px 0 8px; border: solid #c9ccd3; border-width: 1px 0; }
.rail-more { width: 38px; height: 42px; margin-top: auto; padding-top: 8px; border-top: 1px solid var(--line); }

.toc { flex: none; width: 227px; display: flex; flex-direction: column; padding-left: 3px; border-right: 1px solid var(--line); }
.toc-head { display: flex; align-items: center; justify-content: space-between; height: 30px; padding: 0 11px; }
.toc-head h2 { font-size: 18px; line-height: 28px; }
.toc-tools { display: flex; align-items: center; gap: 10px; height: 24px; margin-bottom: 6px; padding: 0 9px 0 5px; }
.smart { gap: 4px; margin-left: auto; }
.toc-list { flex: 1; margin-right: 5px; border: 1px solid var(--line); border-radius: 2px; }

.canvas { flex: 1; min-width: 0; display: flex; justify-content: center; overflow: hidden; padding: 18px 0 0 3px; }
.page { position: relative; width: 746px; padding: 110px 105px 0; background: #fff; box-shadow: 0 0 14px rgba(60, 70, 90, .3); }
.crop { position: absolute; top: 68px; width: 22px; height: 23px; border: solid #c6c6c6; border-width: 0 1px 1px 0; }
.crop-l { left: 91px; }
.crop-r { right: 91px; border-width: 0 0 1px 1px; }
.table-wrap { position: relative; width: 524px; }
table { width: 100%; border-collapse: collapse; table-layout: fixed; font: 15px/19px "Noto Sans CJK SC", sans-serif; color: #000; }
td { height: 80px; padding: 6px 7px 0; border: 1px solid #000; background: #c7c7c7; vertical-align: top; }
td.lead { padding-top: 17px; text-indent: 33px; }
tr:last-child td { height: 82px; }
.row-ends { position: absolute; left: 100%; top: 1px; display: flex; flex-direction: column; gap: 64px; }
.row-ends i { width: 7px; height: 16px; background: #c7c7c7; }
.grip { position: absolute; width: 20px; height: 20px; border: 1px solid #c3c3c3; border-radius: 2px; background: #fff; }
.grip-move { right: 100%; bottom: 100%; }
.grip-size { left: 100%; top: 100%; margin: -1px; }
.add { position: absolute; display: flex; align-items: center; justify-content: center; border: 1px solid #9a9a9a; background: #f8f8f8; }
.add-col { left: 100%; top: 103px; width: 18px; height: 35px; border-left: 0; border-radius: 0 3px 3px 0; }
.add-row { top: 100%; left: 244px; width: 35px; height: 17px; border-top: 0; border-radius: 0 0 3px 3px; }
.arrow { position: absolute; left: -105px; top: 0; width: 110px; height: 130px; filter: drop-shadow(2px 3px 2px rgba(0, 0, 0, .5)); }

.scrollbar { flex: none; width: 15px; display: flex; flex-direction: column; align-items: center; padding-bottom: 3px; background: #e7e9ef; }
.scrollbar > svg { flex: none; }
.sb-icon { width: 14px; height: 18px; stroke: none; }
.sb-top { width: 15px; background: var(--pane); }
.track { flex: 1; width: 12px; padding-top: 3px; }
.thumb { height: 80%; border-radius: 6px; background: #d3d6de; }

/* styles panel */
.panel { flex: none; width: 261px; display: flex; flex-direction: column; padding: 0 13px 28px 12px; color: #3d475c; }
.panel-head { display: flex; align-items: center; gap: 7px; height: 30px; margin: 0 -7px 9px -3px; }
.panel-head h2 { flex: 1; display: flex; align-items: center; gap: 4px; font-size: 12px; }
.current-style { height: 32px; padding: 0 4px 0 6px; border: 1px solid var(--line); border-radius: 2px; font: 16px/24px "Noto Sans CJK SC", sans-serif; color: #000; }
.big-caret { width: 8px; height: 4px; }
.panel-buttons { display: flex; gap: 10px; margin: 7px 0 20px; }
.panel-buttons button { width: 78px; height: 23px; border: 1px solid var(--line); background: #fff; }
.panel h3 { font-size: 14px; line-height: 22px; margin-bottom: 5px; }
.style-list { flex: 1; list-style: none; padding: 2px 12px 0 2px; border: 1px solid var(--line); border-radius: 2px; background: #fff; color: #000; }
.style-list li { display: flex; align-items: center; justify-content: space-between; height: 34px; padding: 0 1px 0 5px; font-family: "DejaVu Sans Mono", "Noto Sans CJK SC", monospace; font-weight: 700; }
.style-list svg { margin-bottom: 8px; color: #000; }
.style-list .h1 { font-size: 21px; }
.style-list .h2 { font-size: 20px; }
.style-list .h4 { font-size: 18px; }
.style-list .font { font-size: 13px; font-weight: 400; padding-right: 7px; }
.style-list .font u { font-size: 12px; line-height: 24px; margin-bottom: 4px; }
.style-list .body { font-size: 16px; font-weight: 400; }
.style-list .picked { padding: 0 0 0 4px; border: 1px solid var(--blue); }
.show-row { display: flex; align-items: center; justify-content: space-between; margin-top: 7px; }
.show-row .combo { width: 203px; height: 24px; padding-left: 3px; border: 1px solid var(--line); }
.preview-row { display: flex; align-items: center; justify-content: space-between; margin-top: 10px; padding-right: 5px; color: #20283a; }
.preview-row label, .preview-row a { display: flex; align-items: center; }
.preview-row label { gap: 5px; }
.preview-row a { color: #3f7bf0; text-decoration: none; }
.preview-row input { display: grid; width: 13px; height: 13px; appearance: none; border: 1px solid #222; background: #fff; }
.preview-row input:checked::before { content: ""; width: 9px; height: 5px; margin: 2px 0 0 1px; border: solid #222; border-width: 0 0 1px 1px; transform: rotate(-45deg); }

/* status bar */
.status { flex: none; display: flex; align-items: center; height: 29px; border-top: 1px solid var(--line); }
.status .vsep { height: 14px; }
.stat { padding: 0 6px 0 10px; }
.check { display: flex; align-items: center; gap: 2px; height: 24px; padding: 0 3px 0 2px; }
.spell { background: #e8f0fb; }
.status > .caret { margin: 0 5px 0 3px; }
.views { display: flex; align-items: center; gap: 2px; margin-left: auto; }
.view { width: 24px; height: 24px; display: flex; align-items: center; justify-content: center; }
.view.on { background: var(--on); border-radius: 2px; }
.views .vsep { margin: 0 8px; }
.zoom-value { display: flex; align-items: center; gap: 5px; margin: 0 7px 0 3px; font-size: 13px; }
.zoom-btn { width: 18px; justify-content: center; }
.minus { width: 10px; height: 2px; background: var(--ink); }
.zoom { width: 146px; height: 14px; margin: 0 0 0 8px; appearance: none; background: linear-gradient(var(--ink), var(--ink)) left center / 43% 1px no-repeat, linear-gradient(#cfd4dd, #cfd4dd) center / 100% 1px no-repeat; }
.zoom::-webkit-slider-thumb { appearance: none; width: 12px; height: 12px; border: 1px solid #333c4e; border-radius: 6px; background: #f5f7fa; }
.full { margin: 0 14px 0 7px; }

/* desktop overlays */
.ime { position: fixed; right: 0; bottom: 156px; height: 26px; display: flex; align-items: center; gap: 6px; padding-right: 3px; border: 1px solid #b5cdea; background: #fff; z-index: 3; }
.ime .sogou { width: 32px; height: 32px; margin-left: -6px; overflow: visible; }
.ime b { width: 16px; font-size: 15px; color: #0a6ed8; }
.meter { position: fixed; right: 6px; bottom: 82px; display: flex; align-items: center; z-index: 3; color: #fff; }
.speeds { width: 90px; height: 42px; margin-right: -31px; padding: 0 34px 0 10px; border-radius: 21px 0 0 21px; background: #353941; box-shadow: 0 0 4px rgba(0, 0, 0, .5); }
.speeds div { display: flex; align-items: center; height: 21px; }
.speeds b { flex: 1; text-align: right; font-size: 12px; font-weight: 400; }
.speeds small { font-size: 10px; color: #a8abb2; padding-left: 1px; }
.ball { display: grid; place-items: center; width: 60px; height: 60px; border-radius: 30px; box-shadow: 0 0 6px rgba(0, 0, 0, .5); }
.ball > * { grid-area: 1 / 1; }
.ring { width: 60px; height: 60px; }
.ball p { font: 300 23px/30px "Open Sans", sans-serif; }
.ball small { font-size: 11px; }
.watermark { position: fixed; right: 8px; bottom: 5px; display: flex; opacity: .85; pointer-events: none; z-index: 2; }
.watermark svg { width: 42px; height: 42px; }
.watermark p { display: flex; flex-direction: column; }
.watermark strong { font-size: 21px; line-height: 24px; color: #5a9bdc; }
.watermark span { font: 700 16px/20px "Open Sans", sans-serif; color: #55c477; }
```
